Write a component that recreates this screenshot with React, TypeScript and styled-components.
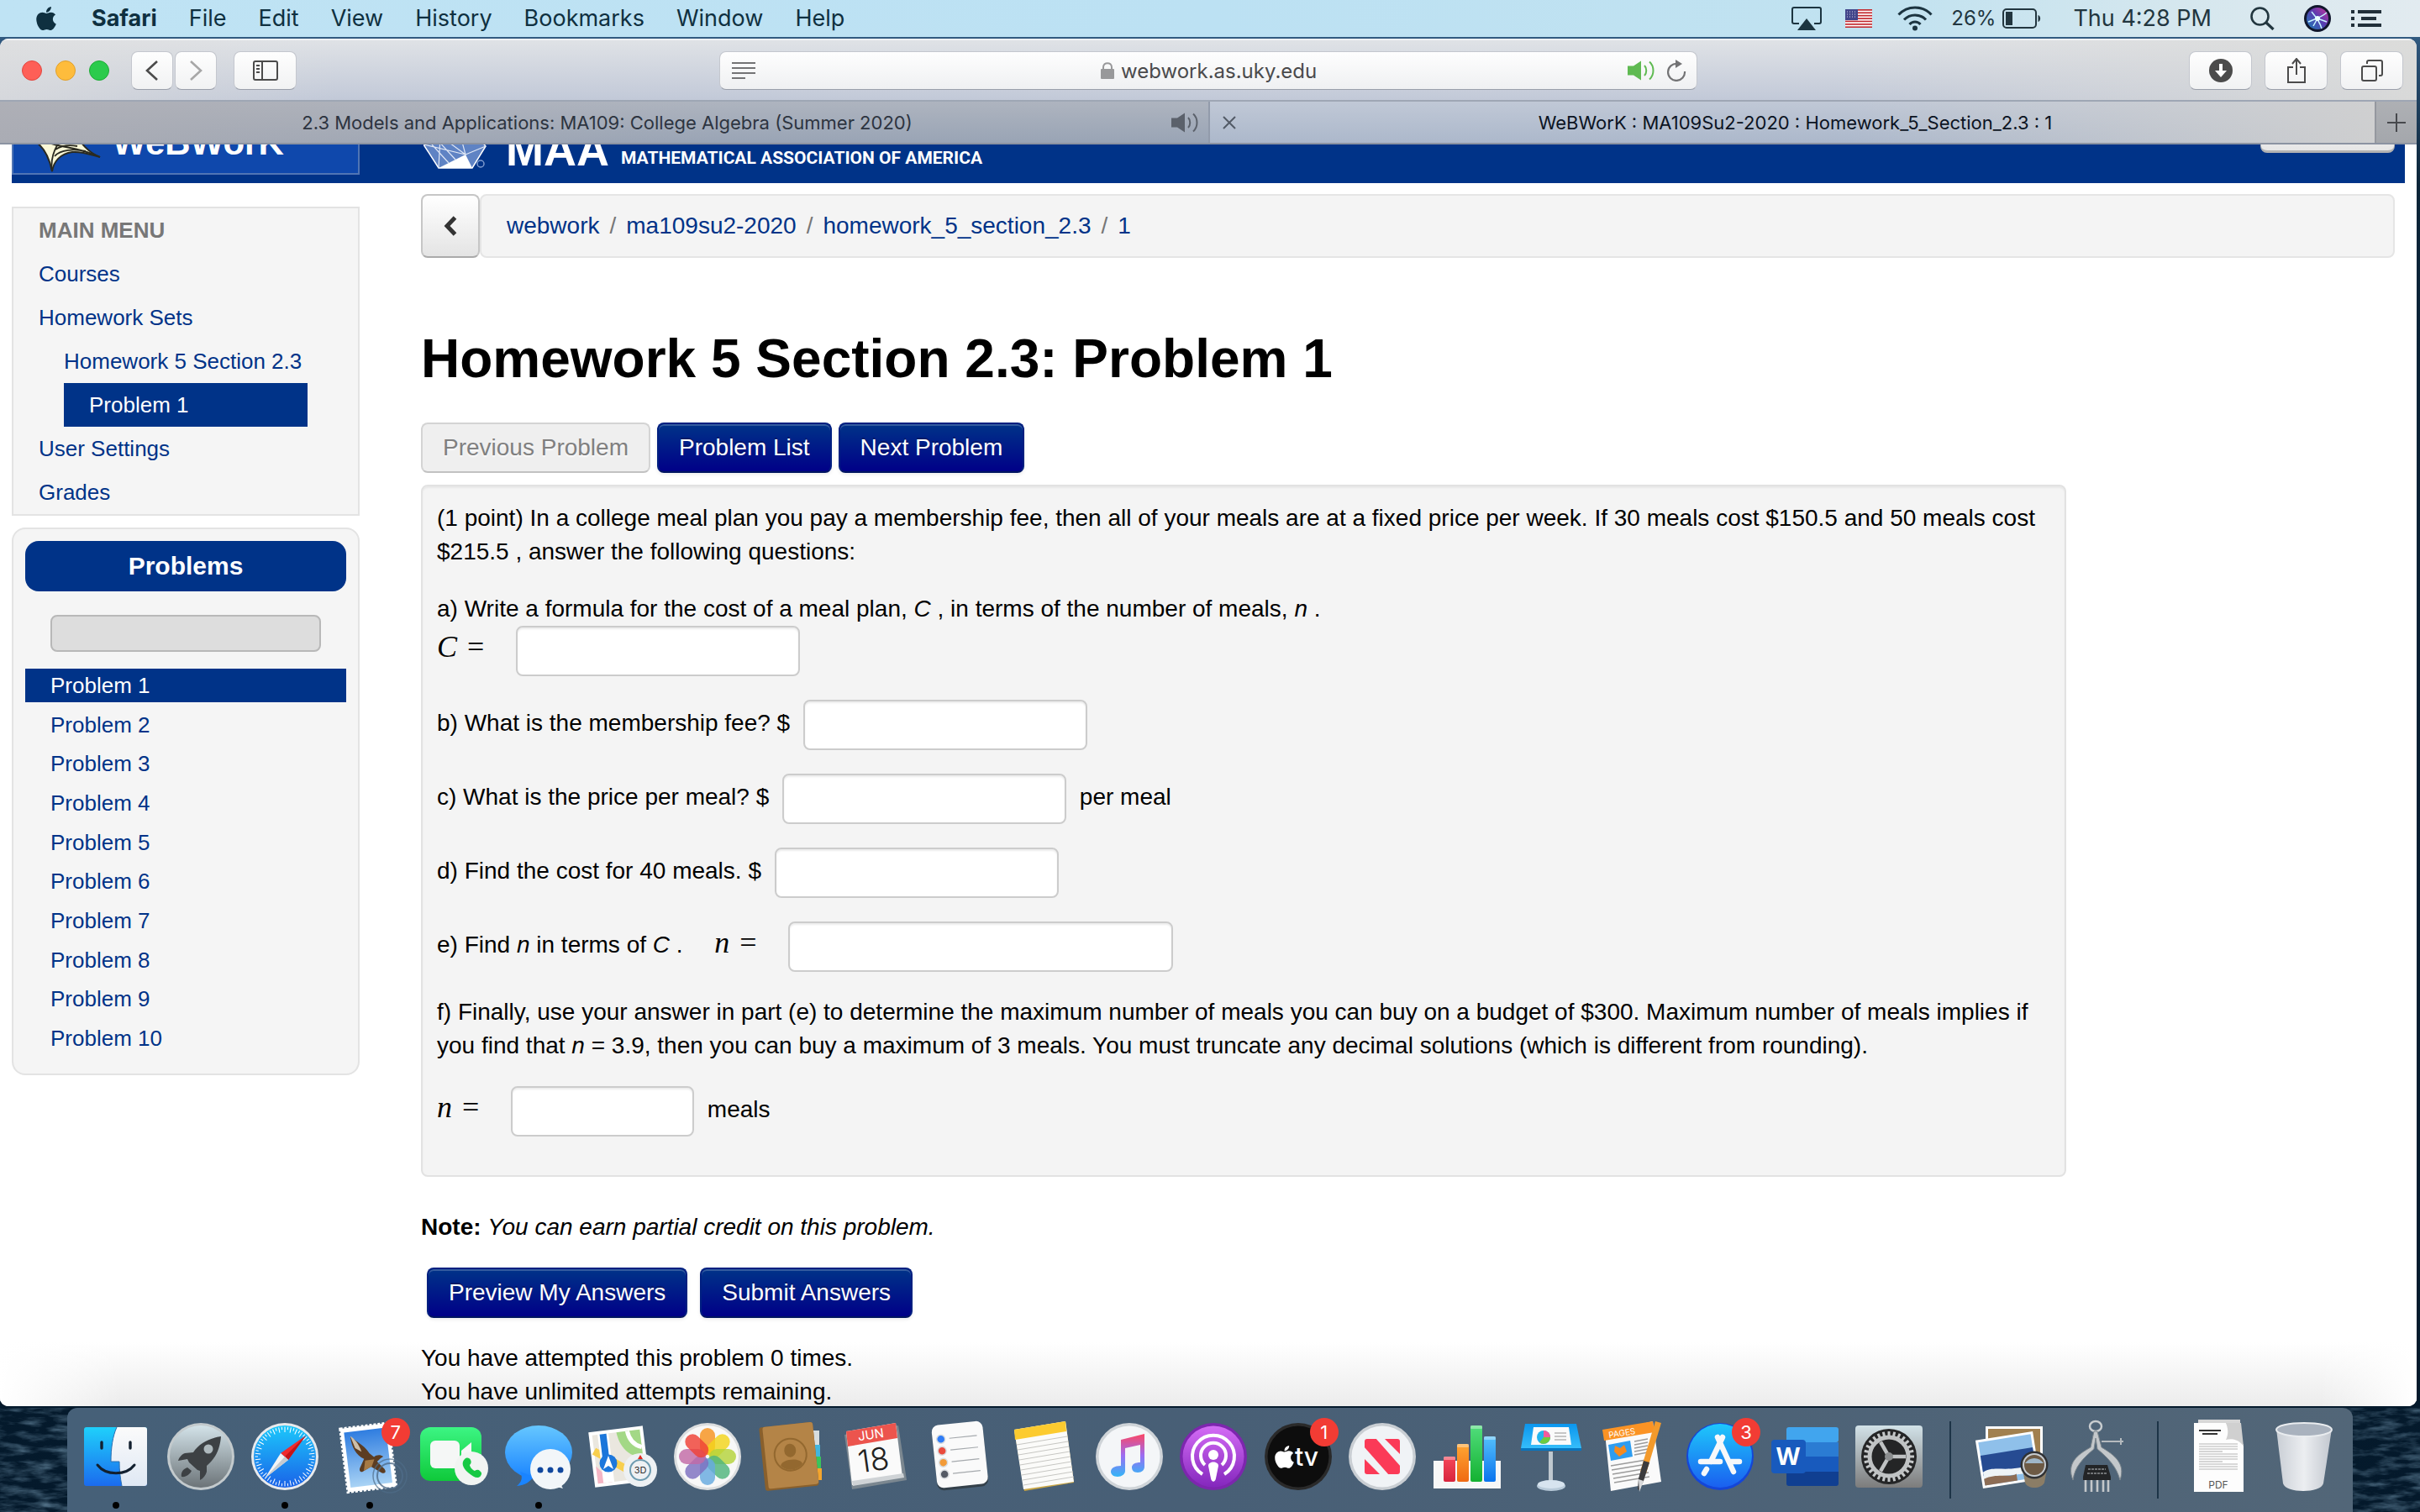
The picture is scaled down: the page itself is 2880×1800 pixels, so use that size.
import React from "react";
import styled, { createGlobalStyle, css } from "styled-components";
import { FaApple } from "react-icons/fa";

const ui = `"Inter", "Liberation Sans", sans-serif`;
const web = `"Liberation Sans", Arial, sans-serif`;
const navy = "#003388";

const GlobalStyle = createGlobalStyle`
  *, *::before, *::after { box-sizing: border-box; }
  html, body { margin: 0; padding: 0; }
  body { font-family: ${web}; color: #000; }
  button, input { font: inherit; color: inherit; margin: 0; }
  svg { display: block; }
`;

/* ---------- desktop ---------- */

const Desktop = styled.div`
  height: 100vh;
  display: flex;
  flex-direction: column;
  overflow: hidden;
  background: linear-gradient(#3f7099 0, #2d5378 60px, #0b2438 220px, #04192b);
`;

const MenuBar = styled.header`
  flex: none;
  height: 44px;
  padding: 0 46px 0 39px;
  display: flex;
  align-items: center;
  justify-content: space-between;
  background: linear-gradient(90deg, #bfe3f4, #bce1f3 50%, #c1e2f0 78%, #d5e7ee 90%, #e2ebf0);
  font-family: ${ui};
  font-size: 27px;
  color: #0f3040;
`;

const MenuGroup = styled.nav`
  display: flex;
  align-items: center;
  gap: 38px;
`;

const MenuItem = styled.button<{ $bold?: boolean }>`
  border: 0;
  padding: 0;
  background: none;
  line-height: 44px;
  font-weight: ${(p) => (p.$bold ? 700 : 400)};
`;

const Status = styled.div`
  display: flex;
  align-items: center;
  color: #22363f;
`;

const StatusItem = styled.span<{ $gap: number; $small?: boolean }>`
  margin-left: ${(p) => p.$gap}px;
  line-height: 44px;
  white-space: nowrap;
  ${(p) => p.$small && css`font-size: 24px;`}
`;

/* ---------- browser window ---------- */

const BrowserWindow = styled.main`
  flex: 1;
  min-height: 0;
  margin: 2px 4px 2px 0;
  display: flex;
  flex-direction: column;
  overflow: hidden;
  border-radius: 10px;
  background: #fff;
`;

const Toolbar = styled.div`
  flex: none;
  height: 75px;
  padding: 0 16px;
  display: grid;
  grid-template-columns: 1fr minmax(0, 1164px) 1fr;
  align-items: center;
  border-top: 2px solid #eff1f3;
  border-bottom: 2px solid #9ea6b4;
  background:
    linear-gradient(90deg, rgba(222, 222, 222, 0.7), transparent 14%, transparent 76%, rgba(219, 219, 217, 0.9)),
    linear-gradient(#dfe2e6, #c2c9d8);
`;

const ToolGroup = styled.div<{ $end?: boolean }>`
  display: flex;
  align-items: center;
  gap: ${(p) => (p.$end ? 15 : 2)}px;
  justify-content: ${(p) => (p.$end ? "flex-end" : "flex-start")};
`;

const Lights = styled.div`
  display: flex;
  gap: 16px;
  margin: 0 24px 0 10px;
`;

const Light = styled.button<{ $color: string; $edge: string }>`
  width: 24px;
  height: 24px;
  padding: 0;
  border-radius: 50%;
  border: 1px solid ${(p) => p.$edge};
  background: ${(p) => p.$color};
`;

const ToolButton = styled.button<{ $wide?: boolean }>`
  width: ${(p) => (p.$wide ? 75 : 50)}px;
  height: 46px;
  padding: 0;
  display: grid;
  place-items: center;
  border: 1px solid #c4c7ce;
  border-bottom-color: #9a9faa;
  border-radius: 8px;
  background: linear-gradient(#fefefe, #f1f2f3);
`;

const SidebarSlot = styled.div`
  margin-left: 18px;
`;

const AddressBar = styled.div`
  height: 46px;
  padding: 0 12px 0 14px;
  display: grid;
  grid-template-columns: 1fr auto 1fr;
  align-items: center;
  border: 1px solid #c4c7ce;
  border-bottom-color: #9a9faa;
  border-radius: 8px;
  background: linear-gradient(#fefefe, #eff0f2);
  font-family: ${ui};
  font-size: 24px;
  color: #4a4a4c;
`;

const AddressText = styled.label`
  display: flex;
  align-items: center;
  gap: 8px;
`;

const AddressInput = styled.input`
  width: 234px;
  height: 44px;
  padding: 2px 0 0;
  border: 0;
  outline: 0;
  background: none;
`;

const AddressIcons = styled.div`
  display: flex;
  align-items: center;
  justify-content: flex-end;
  gap: 12px;
`;

const TabBar = styled.div`
  flex: none;
  height: 51px;
  display: grid;
  grid-template-columns: 1438fr 1388fr 50px;
  border-bottom: 2px solid #8b93a2;
  font-family: ${ui};
  font-size: 22px;
`;

const Tab = styled.div<{ $active?: boolean }>`
  min-width: 0;
  padding: 0 8px 0 15px;
  display: grid;
  grid-template-columns: 36px 1fr 36px;
  align-items: center;
  color: ${(p) => (p.$active ? "#0b1322" : "#2d3440")};
  border-left: ${(p) => (p.$active ? "2px solid #929bab" : "0")};
  background: ${(p) =>
    p.$active
      ? "linear-gradient(90deg, transparent 55%, rgba(208,208,208,.95)), linear-gradient(#c0c8d6, #acb8cb)"
      : "linear-gradient(90deg, rgba(174,174,180,.8), transparent 60%), linear-gradient(#aeb4bf, #99a4b5)"};
`;

const TabTitle = styled.span`
  text-align: center;
  white-space: nowrap;
`;

const IconButton = styled.button`
  border: 0;
  padding: 0;
  background: none;
`;

const NewTab = styled.button`
  padding: 0;
  border: 0;
  border-left: 2px solid #95989f;
  display: grid;
  place-items: center;
  background: linear-gradient(#aeb0b4, #a4a7ac);
`;

/* ---------- web page ---------- */

const Viewport = styled.div`
  flex: 1;
  min-height: 0;
  overflow: hidden;
  background:
    linear-gradient(90deg, #fff, transparent 5%, transparent 96%, #fff) bottom / 100% 90px no-repeat,
    linear-gradient(#fff, #ececec) bottom / 100% 76px no-repeat,
    #fff;
`;

/* The page is shown scrolled down past most of its masthead. */
const Page = styled.div`
  margin-top: -84px;
  padding: 0 14px;
`;

const Masthead = styled.div`
  height: 130px;
  padding-bottom: 10px;
  display: flex;
  align-items: flex-end;
  background: ${navy};
  color: #fff;
`;

const WebworkLogo = styled.a`
  width: 414px;
  height: 120px;
  padding-left: 24px;
  display: flex;
  align-items: flex-end;
  gap: 14px;
  border: 2px solid #5075b4;
  background: #0f48ac;
  color: #fff;
  text-decoration: none;
`;

const WebworkName = styled.span`
  padding-bottom: 16px;
  font-size: 42px;
  font-weight: 700;
  line-height: 40px;
`;

const MaaLogo = styled.a`
  margin-left: 76px;
  height: 120px;
  padding-bottom: 6px;
  display: flex;
  align-items: flex-end;
  color: #fff;
  text-decoration: none;
`;

const MaaLetters = styled.span`
  margin-left: 18px;
  font-size: 54px;
  font-weight: 700;
  line-height: 48px;
`;

const MaaName = styled.span`
  margin-left: 14px;
  font-family: "Roboto", sans-serif;
  font-size: 21px;
  font-weight: 700;
  line-height: 28px;
  white-space: nowrap;
`;

const LogOut = styled.button`
  margin: 0 12px 26px auto;
  width: 160px;
  height: 60px;
  border: 1px solid #b3b3b3;
  border-bottom: 3px solid #b3b3b3;
  border-radius: 8px;
  background: linear-gradient(#fff, #e6e6e6);
  color: #333;
  font-size: 26px;
`;

const Columns = styled.div`
  display: grid;
  grid-template-columns: 414px minmax(0, 1fr);
  column-gap: 73px;
  align-items: start;
`;

const Sidebar = styled.aside`
  padding-top: 28px;
  font-size: 26px;
`;

const MainMenu = styled.nav`
  padding: 0 60px 0 30px;
  border: 2px solid #e3e3e3;
  background: #f5f5f5;
`;

const MenuHeading = styled.div`
  line-height: 52px;
  font-weight: 700;
  color: #777;
`;

const NavList = styled.ul<{ $nested?: boolean }>`
  margin: 0;
  padding: 0 0 0 ${(p) => (p.$nested ? 30 : 0)}px;
  list-style: none;
`;

const NavLink = styled.a<{ $active?: boolean }>`
  display: block;
  line-height: 52px;
  white-space: nowrap;
  text-decoration: none;
  color: ${(p) => (p.$active ? "#fff" : navy)};
  ${(p) => p.$active && css`padding-left: 30px; background: ${navy};`}
`;

const ProblemsPanel = styled.section`
  margin-top: 14px;
  padding: 14px 14px 22px;
  border: 2px solid #e3e3e3;
  border-radius: 16px;
  background: #f5f5f5;
`;

const PanelHeading = styled.h2`
  margin: 0;
  border-radius: 16px;
  background: ${navy};
  color: #fff;
  text-align: center;
  font-size: 30px;
  line-height: 60px;
`;

const ProgressTrack = styled.div`
  height: 44px;
  margin: 28px 30px 20px;
  border: 2px solid #b8b8b8;
  border-radius: 8px;
  background: #ddd;
`;

const ProblemList = styled.ul`
  margin: 0;
  padding: 0;
  height: 460px;
  list-style: none;
  display: flex;
  flex-direction: column;
  justify-content: space-between;
`;

const ProblemLink = styled.a<{ $active?: boolean }>`
  display: block;
  padding-left: 30px;
  line-height: 40px;
  text-decoration: none;
  color: ${(p) => (p.$active ? "#fff" : navy)};
  background: ${(p) => (p.$active ? navy : "none")};
`;

const Content = styled.div`
  padding: 13px 12px 0 0;
  font-size: 28px;
  line-height: 40px;
`;

const CrumbRow = styled.div`
  display: flex;
  height: 76px;
`;

const BackButton = styled.button`
  width: 70px;
  padding: 0;
  display: grid;
  place-items: center;
  border: 2px solid #c6c6c6;
  border-bottom-color: #aaa;
  border-radius: 8px;
  background: linear-gradient(#fff, #e4e4e4);
`;

const Crumbs = styled.nav`
  flex: 1;
  padding: 0 30px;
  display: flex;
  align-items: center;
  gap: 12px;
  border: 2px solid #e5e5e5;
  border-radius: 8px;
  background: #f4f4f4;
  color: #777;
`;

const Crumb = styled.a`
  color: ${navy};
  text-decoration: none;
`;

const Title = styled.h1`
  margin: 80px 0 36px;
  font-size: 64px;
  line-height: 80px;
`;

const ButtonRow = styled.div<{ $submit?: boolean }>`
  display: flex;
  gap: ${(p) => (p.$submit ? 15 : 8)}px;
  padding-left: ${(p) => (p.$submit ? 7 : 0)}px;
  margin: ${(p) => (p.$submit ? "28px 0" : "0 0 14px")};
`;

const Button = styled.button`
  height: 60px;
  padding: 0 24px;
  border: 2px solid #001f80;
  border-bottom-color: #001560;
  border-radius: 8px;
  background: linear-gradient(#003388, #000088);
  box-shadow: inset 0 2px 0 rgba(255, 255, 255, 0.2), 0 2px 4px rgba(0, 0, 0, 0.08);
  color: #fff;
  text-shadow: 0 -2px 0 rgba(0, 0, 0, 0.25);
  white-space: nowrap;
  &:disabled {
    border-color: #d4d4d4;
    border-bottom-color: #c2c2c2;
    background: #efefef;
    box-shadow: none;
    color: #808080;
    text-shadow: 0 2px 2px rgba(255, 255, 255, 0.75);
  }
`;

const ProblemColumns = styled.div`
  display: grid;
  grid-template-columns: 5fr 1fr;
`;

const ProblemBody = styled.form`
  padding: 18px 16px 46px 17px;
  display: grid;
  gap: 28px;
  border: 2px solid #e2e2e2;
  border-radius: 8px;
  background: #f4f4f4;
  box-shadow: inset 0 2px 2px rgba(0, 0, 0, 0.05);
`;

const Paragraph = styled.p`
  margin: 0;
`;

const MathText = styled.span<{ $indent?: boolean }>`
  margin-left: ${(p) => (p.$indent ? 30 : 0)}px;
  margin-right: 22px;
  font-family: "Liberation Serif", "Times New Roman", serif;
  font-size: 36px;
  line-height: 36px;
  i {
    margin-right: 3px;
  }
`;

const Answer = styled.input<{ $width?: number }>`
  width: ${(p) => p.$width ?? 338}px;
  height: 60px;
  margin: 0 8px;
  padding: 8px 12px;
  vertical-align: middle;
  border: 2px solid #ccc;
  border-radius: 8px;
  background: #fff;
  box-shadow: inset 0 2px 2px rgba(0, 0, 0, 0.075);
`;

const Note = styled.p`
  margin: 40px 0 0;
`;

/* ---------- dock ---------- */

const DockArea = styled.footer`
  position: relative;
  flex: none;
  height: 124px;
  padding: 0 80px;
`;

const Waves = styled.svg`
  position: absolute;
  inset: -12px 0 0;
  width: 100%;
  height: 136px;
  z-index: 0;
`;

const DockTray = styled.div`
  position: relative;
  height: 124px;
  padding: 18px 8px 0;
  display: flex;
  border-radius: 12px 12px 0 0;
  background: linear-gradient(90deg, #466078, #485f76 50%, #526678);
`;

const DockSlot = styled.button`
  flex: 1;
  height: 106px;
  padding: 0;
  border: 0;
  background: none;
  display: flex;
  flex-direction: column;
  align-items: center;
  gap: 14px;
`;

const IconHolder = styled.span`
  position: relative;
  width: 80px;
  height: 80px;
`;

const DockIcon = styled.svg`
  width: 80px;
  height: 80px;
  overflow: visible;
`;

const Badge = styled.span`
  position: absolute;
  right: -8px;
  top: -6px;
  width: 34px;
  height: 34px;
  border-radius: 50%;
  background: #f23c34;
  color: #fff;
  font: 22px/34px ${ui};
  text-align: center;
`;

const Running = styled.span`
  width: 8px;
  height: 8px;
  border-radius: 50%;
  background: #000;
`;

const DockDivider = styled.span`
  width: 2px;
  height: 92px;
  margin: -2px 22px 0;
  background: #1d3447;
`;

/* ---------- dock artwork ---------- */

const Grad = ({ id, a, b }: { id: string; a: string; b: string }) => (
  <linearGradient id={id} x1="0" y1="0" x2="0" y2="1">
    <stop offset="0" stopColor={a} />
    <stop offset="1" stopColor={b} />
  </linearGradient>
);

const spokes = (n: number) => Array.from({ length: n }, (_, i) => (i * 360) / n);

const Finder = (
  <>
    <Grad id="fa" a="#1fd0fb" b="#1b6bee" />
    <Grad id="fb" a="#fbfbfb" b="#dfe8f4" />
    <rect x="2" y="5" width="75" height="70" rx="3" fill="url(#fa)" />
    <path d="M41 5H74a3 3 0 0 1 3 3V72a3 3 0 0 1-3 3H47C45 65 44 56 44 46H34C34 30 36 16 41 5Z" fill="url(#fb)" />
    <path d="M41 5C36 16 34 30 34 46H44C44 56 45 65 47 75" fill="none" stroke="#2a6fb0" strokeWidth="1" />
    <path d="M23 23v7M57 23v7" stroke="#12202f" strokeWidth="3.4" strokeLinecap="round" />
    <path d="M18 50c10 13 34 13 44 0" fill="none" stroke="#12202f" strokeWidth="3" strokeLinecap="round" />
  </>
);

const Launchpad = (
  <>
    <Grad id="la" a="#d3e3e9" b="#6c7478" />
    <circle cx="40" cy="40" r="40" fill="#c3cacd" />
    <circle cx="40" cy="40" r="37" fill="url(#la)" />
    <path d="M64 16C50 18 38 24 31 35L21 36C16 38 14 42 13 45L24 43L26 47L36 56L39 57L39 68C43 66 46 62 47 58L47 51C58 42 63 30 64 16Z" fill="#3d4144" />
    <path d="M24 53C18 55 16 60 17 64C22 65 27 61 29 57Z" fill="#3d4144" />
    <circle cx="49" cy="31" r="5.5" fill="#aeb9bd" />
  </>
);

const Safari = (
  <>
    <Grad id="sa" a="#1cc8fb" b="#1a62e8" />
    <circle cx="40" cy="40" r="40" fill="#e9eaec" />
    <circle cx="40" cy="40" r="37" fill="url(#sa)" />
    {spokes(60).map((a, i) => (
      <path key={a} d={i % 2 ? "M40 4.500V8" : "M40 4.500V11"} stroke="#fff" strokeWidth="1" transform={`rotate(${a} 40 40)`} />
    ))}
    <path d="M65 15L35 36L44 44Z" fill="#ee2b2e" />
    <path d="M65 15L40 40L44 44Z" fill="#c41418" />
    <path d="M16 66L35 36L44 44Z" fill="#f3f4f5" />
    <path d="M16 66L40 40L44 44Z" fill="#c6cbd0" />
  </>
);

const Mail = (
  <g>
    <Grad id="ma" a="#2f7de0" b="#a9d3f5" />
    <g transform="rotate(-7 40 40)">
      <rect x="9" y="3" width="58" height="76" fill="#fff" stroke="#fff" strokeWidth="3" strokeDasharray="3 2" />
      <rect x="13" y="8" width="50" height="66" fill="url(#ma)" />
      <path d="M20 14C20 26 24 36 33 42L28 50C25 54 26 57 29 57L40 52L52 61C56 63 58 60 55 56L48 47C51 45 53 43 56 42C53 39 48 39 45 41L40 36C37 28 29 22 20 14Z" fill="#5c3d22" />
      <path d="M20 13C24 16 29 23 31 33L24 28Z" fill="#cdbfa9" />
      <path d="M34 44L45 44L41 52L31 56Z" fill="#a67a45" />
    </g>
    <circle cx="64" cy="63" r="15" fill="none" stroke="#4f6c88" strokeWidth="2" opacity=".8" />
    <circle cx="64" cy="63" r="20" fill="none" stroke="#4f6c88" strokeWidth="1.500" opacity=".7" />
  </g>
);

const FaceTime = (
  <>
    <Grad id="ga" a="#3cf583" b="#0fc93a" />
    <rect x="0" y="5" width="73" height="64" rx="12" fill="url(#ga)" />
    <rect x="12" y="21" width="35" height="33" rx="6" fill="#f5f7f6" />
    <path d="M49 33L61 23V52L49 44Z" fill="#f5f7f6" />
    <circle cx="61" cy="54" r="20" fill="#f1f4f2" />
    <path d="M53 43c-4 4-3 10 4 16s12 8 15 4c2-3 1-4-1-6s-4-1-6 0c-3-1-6-5-6-7c2-2 2-4 1-6s-4-4-7-1Z" fill="#17c944" />
  </>
);

const Messages = (
  <>
    <Grad id="mb" a="#66c7ff" b="#1a84ff" />
    <ellipse cx="40" cy="35" rx="40" ry="32" fill="url(#mb)" />
    <path d="M18 58C22 66 19 71 14 75C24 74 30 70 34 64Z" fill="#1a84ff" />
    <circle cx="54" cy="55" r="24" fill="#f2f6f9" />
    <path d="M56 76C60 77 64 76 69 78C67 75 66 72 68 69Z" fill="#f2f6f9" />
    <circle cx="42" cy="56" r="3.500" fill="#10479e" />
    <circle cx="54" cy="56" r="3.500" fill="#10479e" />
    <circle cx="66" cy="56" r="3.500" fill="#10479e" />
  </>
);

const Maps = (
  <>
    <g transform="rotate(-7 36 40)">
      <rect x="3" y="7" width="65" height="66" fill="#fff" />
      <rect x="7" y="11" width="57" height="58" fill="#eae7df" />
      <path d="M36 11H64V44C48 42 38 30 36 11Z" fill="#a3d886" />
      <path d="M49 11C50 22 56 29 64 32" fill="none" stroke="#fff" strokeWidth="5" />
      <path d="M7 30L54 64" stroke="#f8cf4e" strokeWidth="9" />
      <path d="M7 48L24 69H7Z" fill="#f5b5c4" />
      <path d="M20 11V69" stroke="#fff" strokeWidth="13" />
      <path d="M20 11V48" stroke="#1b76da" strokeWidth="8" />
    </g>
    <circle cx="23" cy="48" r="10.500" fill="#1c77dc" />
    <path d="M23 39L29 55L23 51L17 55Z" fill="#fff" />
    <circle cx="61" cy="56" r="20" fill="#eef1f3" />
    <circle cx="61" cy="56" r="12" fill="none" stroke="#6c9bb0" strokeWidth="2" />
    <path d="M61 38l3 5h-6Z" fill="#e3261d" />
    <text x="61" y="60" textAnchor="middle" fontFamily="Inter, sans-serif" fontSize="11" fill="#333">3D</text>
  </>
);

const petals = ["#f7931e", "#f3d41b", "#b4d33a", "#4fb57b", "#66a9df", "#7d6fc0", "#c26aa6", "#ef4136"];
const Photos = (
  <>
    <circle cx="40" cy="40" r="40" fill="#dcdedf" />
    <circle cx="40" cy="40" r="37" fill="#f8f8f8" />
    {petals.map((c, i) => (
      <rect key={c} x="31" y="6" width="18" height="32" rx="9" fill={c} opacity=".82" transform={`rotate(${i * 45} 40 40)`} />
    ))}
  </>
);

const Contacts = (
  <>
    <rect x="66" y="9" width="7" height="18" fill="#d7dde0" />
    <rect x="67" y="26" width="7" height="14" fill="#41b6e0" />
    <rect x="68" y="40" width="7" height="14" fill="#3ac45c" />
    <rect x="69" y="54" width="7" height="14" fill="#f4a52d" />
    <g transform="rotate(-6 36 40)">
      <rect x="5" y="2" width="64" height="76" rx="3" fill="#8a602c" />
      <rect x="9" y="2" width="60" height="74" rx="3" fill="#b48447" />
      <circle cx="39" cy="38" r="19" fill="none" stroke="#93682f" strokeWidth="2" />
      <ellipse cx="39" cy="33" rx="7" ry="8" fill="#93682f" />
      <path d="M26 50C28 42 50 42 52 50C46 58 32 58 26 50Z" fill="#93682f" />
    </g>
  </>
);

const Calendar = (
  <>
    <path d="M3 14L67 3L77 68L12 79Z" fill="#7b8790" />
    <path d="M5 10L64 0L72 64L12 74Z" fill="#fafafa" />
    <path d="M5 10L64 0L66 18L7 28Z" fill="#ec544d" />
    <path d="M12 69L73 60L74 65L13 75Z" fill="#cfd3d6" />
    <g transform="rotate(-8 37 40)" fontFamily="Inter, sans-serif" textAnchor="middle">
      <text x="38" y="19" fontSize="15" fill="#fff">JUN</text>
      <text x="37" y="57" fontSize="37" fontWeight="300" fill="#222">18</text>
    </g>
  </>
);

const Reminders = (
  <g transform="rotate(-6 40 40)">
    <rect x="9" y="2" width="61" height="76" rx="8" fill="#34404a" />
    <rect x="9" y="0" width="61" height="75" rx="8" fill="#fafafa" />
    {["#2f7cf6", "#ea4b3d", "#f39b38", "#555b66"].map((c, i) => (
      <g key={c}>
        <circle cx="19" cy={17 + i * 14} r="5" fill={c} stroke="#d9dde0" strokeWidth="1.500" />
        <path d={`M29 ${17 + i * 14}H62`} stroke="#a5a9ad" strokeWidth="1.200" />
      </g>
    ))}
  </g>
);

const Notes = (
  <>
    <path d="M4 8L65 -2L75 71L16 81Z" fill="#c9a646" />
    <path d="M4 8L65 -2L75 70L15 79Z" fill="#fbfbf9" />
    <path d="M4 8L65 -2L66 10L5 20Z" fill="#fccb2f" />
    {Array.from({ length: 9 }, (_, i) => (
      <path key={i} d={`M${7 + i} ${26 + i * 6}L${67 + i} ${16 + i * 6}`} stroke="#c6c6c2" strokeWidth="1" />
    ))}
  </>
);

const Music = (
  <>
    <linearGradient id="mu" x1="0" y1="0" x2="0" y2="1">
      <stop offset="0" stopColor="#fb4664" />
      <stop offset=".5" stopColor="#9d6cf2" />
      <stop offset="1" stopColor="#32b6f7" />
    </linearGradient>
    <circle cx="40" cy="40" r="40" fill="#cfd4d8" />
    <circle cx="40" cy="40" r="36.500" fill="#f4f6f8" />
    <path d="M30 20L58 13V52C58 56 55 59 50 59C45 59 43 56 43 53C43 49 47 47 53 47V26L35 30V57C35 61 31 64 26 64C21 64 18 61 18 58C18 54 22 51 30 51Z" fill="url(#mu)" />
  </>
);

const Podcasts = (
  <>
    <Grad id="pa" a="#d46cf5" b="#8427bd" />
    <circle cx="40" cy="40" r="40" fill="#7d26ae" />
    <circle cx="40" cy="40" r="36.500" fill="url(#pa)" />
    <path d="M27 61A25 25 0 1 1 53 61" fill="none" stroke="#fff" strokeWidth="4" />
    <path d="M30 50A15 15 0 1 1 50 50" fill="none" stroke="#fff" strokeWidth="4" />
    <circle cx="40" cy="38" r="6" fill="#fff" />
    <path d="M34 51C34 45 46 45 46 51L43 66C42 71 38 71 37 66Z" fill="#fff" />
  </>
);

const AppleTV = (
  <>
    <circle cx="40" cy="40" r="40" fill="#2a2a2a" />
    <circle cx="40" cy="40" r="36.500" fill="#0d0d0d" />
    <g transform="translate(12 25)">
      <path
        transform="scale(0.06)"
        fill="#fff"
        d="M318.700 268.700c-.2-36.700 16.400-64.400 50-84.800-18.800-26.900-47.200-41.700-84.700-44.600-35.500-2.800-74.300 20.700-88.500 20.700-15 0-49.400-19.700-76.400-19.700C63.300 141.200 4 184.800 4 273.500q0 39.300 14.400 81.200c12.800 36.700 59 126.700 107.200 125.200 25.200-.6 43-17.900 75.800-17.900 31.800 0 48.300 17.900 76.400 17.900 48.600-.7 90.400-82.500 102.600-119.300-65.200-30.700-61.700-90-61.700-91.900zm-56.600-164.200c27.300-32.400 24.800-61.900 24-72.500-24.100 1.400-52 16.400-67.900 34.900-17.500 19.800-27.800 44.300-25.600 71.900 26.100 2 49.900-11.400 69.500-34.300z"
      />
    </g>
    <text x="36" y="51" fontFamily="Inter, sans-serif" fontSize="30" fontWeight="500" fill="#fff">tv</text>
  </>
);

const News = (
  <>
    <circle cx="40" cy="40" r="40" fill="#c9ced3" />
    <circle cx="40" cy="40" r="36.500" fill="#f0f3f6" />
    <rect x="19" y="19" width="42" height="42" rx="3" fill="#fb3a57" />
    <path d="M32 18H42L62 38V52Z" fill="#f0f3f6" />
    <path d="M18 28L48 62H38L18 42Z" fill="#f0f3f6" />
  </>
);

const Numbers = (
  <>
    <rect x="0" y="45" width="80" height="33" fill="#f7f7f7" />
    {[
      [12, 40, "#f5475a", "#d8253d"],
      [28, 25, "#ffa632", "#f06a13"],
      [44, 3, "#51dd7c", "#14b131"],
      [60, 16, "#55c1fb", "#0a74ee"],
    ].map(([x, y, a, b], i) => (
      <g key={i}>
        <Grad id={`nb${i}`} a={String(a)} b={String(b)} />
        <rect x={x} y={y} width="14" height={70 - Number(y)} rx="2" fill={`url(#nb${i})`} />
        <rect x={x} y={y} width="14" height="4" rx="1" fill="#fff" opacity=".35" />
      </g>
    ))}
  </>
);

const Keynote = (
  <>
    <Grad id="ka" a="#0b96ee" b="#35bdfa" />
    <path d="M37 34H42V75H37Z" fill="#bfc8cf" />
    <ellipse cx="40" cy="75" rx="17" ry="6" fill="#b8cad9" />
    <ellipse cx="40" cy="73" rx="16" ry="5" fill="#d7e4ef" />
    <path d="M9 1H70L76 30H4Z" fill="url(#ka)" />
    <path d="M4 30H76V33H4Z" fill="#0775bf" />
    <path d="M19 5H61L64 26H16Z" fill="#fafafa" />
    <circle cx="31" cy="17" r="8" fill="#22b4ee" />
    <path d="M31 17V9A8 8 0 0 1 39 17Z" fill="#f25a9c" />
    <path d="M31 17H39A8 8 0 0 1 26 23Z" fill="#6ecb40" />
    <path d="M44 12H58M44 16H58M44 20H58" stroke="#b5b5b5" strokeWidth="1.500" />
  </>
);

const Pages = (
  <>
    <path d="M3 12L60 -2L70 70L10 81Z" fill="#fafafa" />
    <path d="M0 8L60 -2L62 11L2 21Z" fill="#fb9324" />
    <text x="8" y="18" fontFamily="Inter, sans-serif" fontSize="10" fill="#fff" transform="rotate(-9 8 18)">PAGES</text>
    <path d="M7 26L33 21L36 40L10 45Z" fill="#2e9df0" />
    <path d="M15 27L21 30L26 26L29 34L20 40L14 34Z" fill="#f58a1e" />
    {[0, 1, 2, 3, 4].map((i) => (
      <path key={i} d={`M${10 + i} ${51 + i * 5}L${52 + i} ${44 + i * 5}M38 ${22 + i * 4}L54 ${19 + i * 4}`} stroke="#9b9b9b" strokeWidth="1.300" />
    ))}
    <path d="M63 -2L70 0L52 60L45 58Z" fill="#f39a2b" />
    <path d="M49 45L56 47L49 69L44 80L42 79L43 66Z" fill="#3c3c3e" />
    <path d="M43 67L49 69L44 82Z" fill="#d9dadc" />
  </>
);

const AppStore = (
  <>
    <Grad id="as" a="#1ec8fb" b="#1a5ff0" />
    <circle cx="40" cy="40" r="40" fill="#1446d8" />
    <circle cx="40" cy="39" r="38" fill="url(#as)" />
    <path d="M37 17L56 58M43 17L29 46M24 55L21 60M17 46H40M52 46H63" stroke="#f6f8fa" strokeWidth="6.500" strokeLinecap="round" fill="none" />
  </>
);

const Word = (
  <g transform="translate(5 0)">
    <rect x="13" y="5" width="62" height="18" rx="3" fill="#41a5ee" />
    <rect x="13" y="23" width="62" height="18" fill="#2b7cd3" />
    <rect x="13" y="40" width="62" height="18" fill="#185abd" />
    <path d="M13 58H75V72a3 3 0 0 1-3 3H16a3 3 0 0 1-3-3Z" fill="#103f91" />
    <rect x="-5" y="20" width="41" height="40" rx="4" fill="#185abd" />
    <text x="15" y="50" textAnchor="middle" fontFamily="Open Sans, sans-serif" fontSize="29" fontWeight="700" fill="#fff">W</text>
  </g>
);

const Prefs = (
  <>
    <Grad id="sp" a="#d2e2e8" b="#7c7c7c" />
    <rect x="0" y="3" width="80" height="74" rx="4" fill="url(#sp)" />
    <circle cx="40" cy="40" r="33" fill="#242526" />
    {spokes(28).map((a) => (
      <path key={a} d="M40 10V16" stroke="#c5c8c9" strokeWidth="3" transform={`rotate(${a} 40 40)`} />
    ))}
    <circle cx="40" cy="40" r="23" fill="none" stroke="#bfc2c3" strokeWidth="5" />
    {[90, 210, 330].map((a) => (
      <path key={a} d="M40 40V20" stroke="#bfc2c3" strokeWidth="4.500" transform={`rotate(${a} 40 40)`} />
    ))}
    <circle cx="40" cy="40" r="5" fill="#8a8d8e" />
  </>
);

const Preview = (
  <>
    <rect x="8" y="4" width="68" height="62" fill="#fff" />
    <rect x="11" y="7" width="62" height="56" fill="#a1804f" />
    <g transform="rotate(-9 34 44)">
      <rect x="0" y="15" width="69" height="58" fill="#fff" />
      <rect x="3" y="18" width="63" height="52" fill="#8fc0ea" />
      <rect x="3" y="34" width="63" height="24" fill="#264b92" />
      <path d="M3 54C18 47 30 60 66 54V62C40 66 20 58 3 64Z" fill="#eef4f7" />
      <path d="M3 62C20 57 34 66 42 62V70H3Z" fill="#8d6d55" />
    </g>
    <path d="M51 50L82 50L78 71C74 79 58 79 55 71Z" fill="#8b7d66" />
    <circle cx="66" cy="50" r="16.500" fill="#2f3134" />
    <circle cx="66" cy="50" r="14" fill="#c6cbd0" />
    <circle cx="66" cy="50" r="12" fill="#6d5a45" />
    <path d="M55 48C60 40 72 40 77 48Z" fill="#9fb6c8" />
  </>
);

const Caliper = (
  <>
    <ellipse cx="39" cy="4" rx="7" ry="6" fill="none" stroke="#c9cdd0" strokeWidth="2.500" />
    <path d="M37 10L33 29C17 38 4 48 12 68C14 52 24 42 37 31L39 18L41 31C54 42 64 52 68 68C75 48 61 38 46 29L41 10Z" fill="#c4c8cb" stroke="#7c868d" strokeWidth="1" />
    <path d="M46 22H72M69 18V26" stroke="#b5babe" strokeWidth="2" />
    <path d="M27 50H53L57 64V68H24V64Z" fill="#232527" />
    <path d="M30 55H51M29 60H52" stroke="#8c8f92" strokeWidth="1.500" strokeDasharray="3 1" />
    {[27, 34, 41, 48, 54].map((x) => (
      <path key={x} d={`M${x} 68V76M${x} 76V82`} stroke="#c3c7ca" strokeWidth="2.600" />
    ))}
  </>
);

const PdfFile = (
  <>
    <rect x="15" y="-4" width="50" height="6" fill="#d7d7d7" />
    <path d="M10 0H48L69 26V82H10Z" fill="#fdfdfd" />
    <path d="M48 0C52 10 50 16 48 20C56 18 64 20 69 28L66 0Z" fill="#d0d0d0" />
    <path d="M16 9H42M20 13H38" stroke="#333" strokeWidth="2" />
    {Array.from({ length: 11 }, (_, i) => (
      <path key={i} d={`M16 ${25 + i * 3}H${i % 4 === 3 ? 44 : 62}`} stroke="#b5b5b5" strokeWidth="1.100" />
    ))}
    <text x="39" y="78" textAnchor="middle" fontFamily="Inter, sans-serif" fontSize="12" fill="#555">PDF</text>
  </>
);

const Trash = (
  <>
    <linearGradient id="tr" x1="0" x2="1" y1="0" y2="0">
      <stop offset="0" stopColor="#c9ced5" />
      <stop offset=".5" stopColor="#eceef1" />
      <stop offset="1" stopColor="#c2c7cf" />
    </linearGradient>
    <path d="M7 7L15 72C18 84 60 84 63 72L73 7Z" fill="url(#tr)" />
    <ellipse cx="40" cy="8" rx="33" ry="8" fill="#a9b2be" stroke="#e9ecef" strokeWidth="2" />
  </>
);

type DockEntry = { name: string; art: React.ReactNode; badge?: string; running?: boolean };

const apps: DockEntry[] = [
  { name: "Finder", art: Finder, running: true },
  { name: "Launchpad", art: Launchpad },
  { name: "Safari", art: Safari, running: true },
  { name: "Mail", art: Mail, badge: "7", running: true },
  { name: "FaceTime", art: FaceTime },
  { name: "Messages", art: Messages, running: true },
  { name: "Maps", art: Maps },
  { name: "Photos", art: Photos },
  { name: "Contacts", art: Contacts },
  { name: "Calendar", art: Calendar },
  { name: "Reminders", art: Reminders },
  { name: "Notes", art: Notes },
  { name: "Music", art: Music },
  { name: "Podcasts", art: Podcasts },
  { name: "TV", art: AppleTV, badge: "1" },
  { name: "News", art: News },
  { name: "Numbers", art: Numbers },
  { name: "Keynote", art: Keynote },
  { name: "Pages", art: Pages },
  { name: "App Store", art: AppStore, badge: "3" },
  { name: "Word", art: Word },
  { name: "System Preferences", art: Prefs },
];
const recent: DockEntry[] = [
  { name: "Preview", art: Preview },
  { name: "System Information", art: Caliper },
];
const files: DockEntry[] = [
  { name: "Document", art: PdfFile },
  { name: "Trash", art: Trash },
];

const DockItems = ({ items }: { items: DockEntry[] }) => (
  <>
    {items.map((it) => (
      <DockSlot key={it.name} aria-label={it.name}>
        <IconHolder>
          <DockIcon viewBox="0 0 80 80">{it.art}</DockIcon>
          {it.badge && <Badge>{it.badge}</Badge>}
        </IconHolder>
        {it.running && <Running />}
      </DockSlot>
    ))}
  </>
);

/* ---------- small glyphs ---------- */

const Speaker = ({ color }: { color: string }) => (
  <svg width="34" height="24" viewBox="0 0 34 24" fill="none" stroke={color} strokeWidth="2">
    <path d="M0 6.500H7L16 0.500V23.500L7 17.500H0Z" fill={color} stroke="none" />
    <path d="M20 6C23 9 23 15 20 18M26 1.500C32 7 32 17 26 22.500" />
  </svg>
);

const Siri = () => (
  <svg width="32" height="32" viewBox="0 0 32 32">
    <linearGradient id="siri" x1="1" y1="0" x2="0" y2="1">
      <stop offset="0" stopColor="#d0359a" />
      <stop offset=".45" stopColor="#5a3bb0" />
      <stop offset="1" stopColor="#1a7fb8" />
    </linearGradient>
    <circle cx="16" cy="16" r="16" fill="#10162c" />
    <circle cx="16" cy="16" r="13" fill="url(#siri)" />
    <path d="M5 20C12 17 20 15 27 9M9 8C14 14 19 20 21 28M16 16L11 25M16 16L27 20" stroke="#c8f6ff" strokeWidth="1.500" fill="none" />
    <circle cx="16" cy="16" r="3" fill="#e9ffff" />
  </svg>
);

const Flag = () => (
  <svg width="32" height="22" viewBox="0 0 32 22">
    <rect width="32" height="22" fill="#fff" />
    {[0, 1, 2, 3, 4, 5, 6].map((i) => (
      <rect key={i} y={i * 3.4} width="32" height="1.700" fill="#c22a30" />
    ))}
    <rect width="15" height="13" fill="#42458a" />
    <path d="M2 3H14M2 6H14M2 9H14" stroke="#cfd0e6" strokeWidth="1" strokeDasharray="1 2" />
  </svg>
);

const problems = Array.from({ length: 10 }, (_, i) => `Problem ${i + 1}`);

export default function App() {
  return (
    <Desktop>
      <GlobalStyle />
      <MenuBar>
        <MenuGroup>
          <MenuItem aria-label="Apple menu">
            <FaApple size={32} />
          </MenuItem>
          <MenuItem $bold>Safari</MenuItem>
          {["File", "Edit", "View", "History", "Bookmarks", "Window", "Help"].map((m) => (
            <MenuItem key={m}>{m}</MenuItem>
          ))}
        </MenuGroup>
        <Status>
          <svg width="36" height="28" viewBox="0 0 36 28">
            <path d="M9 20H3a2 2 0 0 1-2-2V3a2 2 0 0 1 2-2H33a2 2 0 0 1 2 2V18a2 2 0 0 1-2 2H27" fill="none" stroke="#1c3440" strokeWidth="2" />
            <path d="M18 14L29 28H7Z" fill="#1c3440" />
          </svg>
          <StatusItem $gap={28}><Flag /></StatusItem>
          <StatusItem $gap={30}>
            <svg width="42" height="30" viewBox="0 0 42 30" fill="none" stroke="#1c3440" strokeWidth="3">
              <path d="M1.500 10.500C12 -1 30 -1 40.500 10.500M8 16.500C15 9 27 9 34 16.500M14.500 22C18 18 24 18 27.500 22" />
              <circle cx="21" cy="26.500" r="3" fill="#1c3440" stroke="none" />
            </svg>
          </StatusItem>
          <StatusItem $gap={22} $small>26%</StatusItem>
          <StatusItem $gap={8}>
            <svg width="46" height="24" viewBox="0 0 46 24">
              <rect x="1" y="1" width="39" height="22" rx="4" fill="none" stroke="#22363f" strokeWidth="2" />
              <rect x="4" y="4" width="8" height="16" fill="#22363f" />
              <path d="M42.500 8C46 9 46 15 42.500 16Z" fill="#22363f" />
            </svg>
          </StatusItem>
          <StatusItem $gap={38}>Thu 4:28 PM</StatusItem>
          <StatusItem $gap={46}>
            <svg width="29" height="28" viewBox="0 0 29 28" fill="none" stroke="#22363f" strokeWidth="2.600">
              <circle cx="11.500" cy="11.500" r="10" />
              <path d="M19 19L27.500 27" strokeWidth="3.200" />
            </svg>
          </StatusItem>
          <StatusItem $gap={35}><Siri /></StatusItem>
          <StatusItem $gap={24}>
            <svg width="36" height="20" viewBox="0 0 36 20" fill="#22303a">
              <path d="M0 0H4V4H0ZM0 8H4V12H0ZM0 16H4V20H0ZM8 0H36V4H8ZM12 8H30V12H12ZM8 16H36V20H8Z" />
            </svg>
          </StatusItem>
        </Status>
      </MenuBar>

      <BrowserWindow>
        <Toolbar>
          <ToolGroup>
            <Lights>
              <Light aria-label="Close" $color="#fe5f57" $edge="#e2463f" />
              <Light aria-label="Minimize" $color="#febc3c" $edge="#e0a02c" />
              <Light aria-label="Zoom" $color="#2bcb4c" $edge="#1eab36" />
            </Lights>
            <ToolButton aria-label="Back">
              <svg width="16" height="24" viewBox="0 0 16 24"><path d="M14 1L2 12L14 23" fill="none" stroke="#4b4b4b" strokeWidth="2.600" /></svg>
            </ToolButton>
            <ToolButton aria-label="Forward">
              <svg width="16" height="24" viewBox="0 0 16 24"><path d="M2 1L14 12L2 23" fill="none" stroke="#a7a7a7" strokeWidth="2.600" /></svg>
            </ToolButton>
            <SidebarSlot>
              <ToolButton $wide aria-label="Sidebar">
                <svg width="30" height="24" viewBox="0 0 30 24" fill="none" stroke="#4b4b4b" strokeWidth="2">
                  <rect x="1" y="1" width="28" height="22" rx="2" />
                  <path d="M11 1V23M4 6H8M4 10H8M4 14H8" />
                </svg>
              </ToolButton>
            </SidebarSlot>
          </ToolGroup>
          <AddressBar>
            <svg width="28" height="20" viewBox="0 0 28 20"><path d="M0 1H28M0 7H28M0 13H28M0 19H16" stroke="#737375" strokeWidth="2" /></svg>
            <AddressText>
              <svg width="16" height="20" viewBox="0 0 16 20">
                <rect y="8" width="16" height="12" rx="1" fill="#98989a" />
                <path d="M3 9V6C3 -0.500 13 -0.500 13 6V9" fill="none" stroke="#98989a" strokeWidth="2" />
              </svg>
              <AddressInput aria-label="Address" defaultValue="webwork.as.uky.edu" />
            </AddressText>
            <AddressIcons>
              <IconButton aria-label="Mute page"><Speaker color="#5fba52" /></IconButton>
              <IconButton aria-label="Reload">
                <svg width="24" height="26" viewBox="0 0 24 26">
                  <path d="M13 5A10 10 0 1 0 22 14" fill="none" stroke="#737375" strokeWidth="2.200" />
                  <path d="M11 0L19 5L11 10Z" fill="#737375" />
                </svg>
              </IconButton>
            </AddressIcons>
          </AddressBar>
          <ToolGroup $end>
            <ToolButton $wide aria-label="Downloads">
              <svg width="28" height="28" viewBox="0 0 28 28">
                <circle cx="14" cy="14" r="14" fill="#4b4b4b" />
                <path d="M12 6H16V14H21L14 22L7 14H12Z" fill="#fff" />
              </svg>
            </ToolButton>
            <ToolButton $wide aria-label="Share">
              <svg width="24" height="30" viewBox="0 0 24 30" fill="none" stroke="#4b4b4b" strokeWidth="2">
                <path d="M8 11H2V29H22V11H16M12 20V1M7 7L12 1L17 7" />
              </svg>
            </ToolButton>
            <ToolButton $wide aria-label="Show tabs">
              <svg width="26" height="26" viewBox="0 0 26 26" fill="none" stroke="#4b4b4b" strokeWidth="2">
                <rect x="1" y="8" width="17" height="17" rx="2" />
                <path d="M7 5V3a2 2 0 0 1 2-2H23a2 2 0 0 1 2 2V17a2 2 0 0 1-2 2H21" />
              </svg>
            </ToolButton>
          </ToolGroup>
        </Toolbar>

        <TabBar>
          <Tab>
            <span />
            <TabTitle>2.3 Models and Applications: MA109: College Algebra (Summer 2020)</TabTitle>
            <IconButton aria-label="Mute tab"><Speaker color="#5b616b" /></IconButton>
          </Tab>
          <Tab $active>
            <IconButton aria-label="Close tab">
              <svg width="16" height="16" viewBox="0 0 16 16"><path d="M1 1L15 15M15 1L1 15" stroke="#535a66" strokeWidth="2" /></svg>
            </IconButton>
            <TabTitle>WeBWorK : MA109Su2-2020 : Homework_5_Section_2.3 : 1</TabTitle>
          </Tab>
          <NewTab aria-label="New tab">
            <svg width="22" height="22" viewBox="0 0 22 22"><path d="M11 0V22M0 11H22" stroke="#47494d" strokeWidth="2" /></svg>
          </NewTab>
        </TabBar>

        <Viewport>
          <Page>
            <Masthead>
              <WebworkLogo href="#">
                <svg width="80" height="76" viewBox="0 0 80 76">
                  <path d="M-2 36C10 42 18 54 22 74C24 62 32 53 46 51C58 50 68 54 79 57C66 52 54 40 50 26L34 8L12 22Z" fill="#faf8d8" stroke="#2a2a20" strokeWidth="2" />
                  <path d="M22 74C20 60 24 50 28 43M79 57C64 50 46 46 28 43L10 38M28 43L48 28M25 56C32 48 48 47 62 50M26 48C32 44 42 42 52 44" fill="none" stroke="#2a2a20" strokeWidth="1.800" />
                </svg>
                <WebworkName>WeBWorK</WebworkName>
              </WebworkLogo>
              <MaaLogo href="#">
                <svg width="80" height="70" viewBox="0 0 80 70">
                  <path d="M36 0L74 42L58 68H18L0 40Z" fill="#5f83c4" stroke="#fff" strokeWidth="1.500" />
                  <path d="M18 68L50 52L58 68Z" fill="#fff" />
                  <path d="M36 0L50 52L0 40M50 52L74 42M18 68L20 30L50 52M10 40L30 62M16 34L38 58" fill="none" stroke="#dfe7f5" strokeWidth="1.200" />
                  <circle cx="68" cy="63" r="4" fill="none" stroke="#7f9ccf" strokeWidth="1.500" />
                </svg>
                <MaaLetters>MAA</MaaLetters>
                <MaaName>MATHEMATICAL ASSOCIATION OF AMERICA</MaaName>
              </MaaLogo>
              <LogOut aria-label="Log Out" />
            </Masthead>

            <Columns>
              <Sidebar>
                <MainMenu>
                  <MenuHeading>MAIN MENU</MenuHeading>
                  <NavList>
                    <li><NavLink href="#">Courses</NavLink></li>
                    <li>
                      <NavLink href="#">Homework Sets</NavLink>
                      <NavList $nested>
                        <li><NavLink href="#">Homework 5 Section 2.3</NavLink></li>
                        <li><NavLink href="#" $active>Problem 1</NavLink></li>
                      </NavList>
                    </li>
                    <li><NavLink href="#">User Settings</NavLink></li>
                    <li><NavLink href="#">Grades</NavLink></li>
                  </NavList>
                </MainMenu>
                <ProblemsPanel>
                  <PanelHeading>Problems</PanelHeading>
                  <ProgressTrack />
                  <ProblemList>
                    {problems.map((p, i) => (
                      <li key={p}><ProblemLink href="#" $active={i === 0}>{p}</ProblemLink></li>
                    ))}
                  </ProblemList>
                </ProblemsPanel>
              </Sidebar>

              <Content>
                <CrumbRow>
                  <BackButton aria-label="Up one level">
                    <svg width="16" height="24" viewBox="0 0 16 24"><path d="M13.500 2L4 12L13.500 22" fill="none" stroke="#333" strokeWidth="5" /></svg>
                  </BackButton>
                  <Crumbs>
                    <Crumb href="#">webwork</Crumb>/<Crumb href="#">ma109su2-2020</Crumb>/
                    <Crumb href="#">homework_5_section_2.3</Crumb>/<Crumb href="#">1</Crumb>
                  </Crumbs>
                </CrumbRow>
                <Title>Homework 5 Section 2.3: Problem 1</Title>
                <ButtonRow>
                  <Button disabled>Previous Problem</Button>
                  <Button>Problem List</Button>
                  <Button>Next Problem</Button>
                </ButtonRow>
                <ProblemColumns>
                  <ProblemBody>
                    <Paragraph>
                      (1 point) In a college meal plan you pay a membership fee, then all of your meals are at a fixed
                      price per week. If 30 meals cost $150.5 and 50 meals cost $215.5 , answer the following questions:
                    </Paragraph>
                    <Paragraph>
                      a) Write a formula for the cost of a meal plan, <i>C</i> , in terms of the number of meals, <i>n</i> .
                      <br />
                      <label htmlFor="ans-a"><MathText><i>C</i> =</MathText></label> <Answer id="ans-a" />
                    </Paragraph>
                    <Paragraph>
                      <label htmlFor="ans-b">b) What is the membership fee? $</label> <Answer id="ans-b" />
                    </Paragraph>
                    <Paragraph>
                      <label htmlFor="ans-c">c) What is the price per meal? $</label> <Answer id="ans-c" /> per meal
                    </Paragraph>
                    <Paragraph>
                      <label htmlFor="ans-d">d) Find the cost for 40 meals. $</label> <Answer id="ans-d" />
                    </Paragraph>
                    <Paragraph>
                      <label htmlFor="ans-e">
                        e) Find <i>n</i> in terms of <i>C</i> . <MathText $indent><i>n</i> =</MathText>
                      </label>{" "}
                      <Answer id="ans-e" $width={458} />
                    </Paragraph>
                    <Paragraph>
                      f) Finally, use your answer in part (e) to determine the maximum number of meals you can buy on a
                      budget of $300. Maximum number of meals implies if you find that <i>n</i> = 3.9, then you can buy
                      a maximum of 3 meals. You must truncate any decimal solutions (which is different from rounding).
                    </Paragraph>
                    <Paragraph>
                      <label htmlFor="ans-f"><MathText><i>n</i> =</MathText></label> <Answer id="ans-f" $width={218} /> meals
                    </Paragraph>
                  </ProblemBody>
                </ProblemColumns>
                <Note><b>Note:</b> <i>You can earn partial credit on this problem.</i></Note>
                <ButtonRow $submit>
                  <Button>Preview My Answers</Button>
                  <Button>Submit Answers</Button>
                </ButtonRow>
                <Paragraph>
                  You have attempted this problem 0 times.
                  <br />
                  You have unlimited attempts remaining.
                </Paragraph>
              </Content>
            </Columns>
          </Page>
        </Viewport>
      </BrowserWindow>

      <DockArea>
        <Waves aria-hidden="true">
          <filter id="sea" x="0" y="0" width="100%" height="100%">
            <feTurbulence type="fractalNoise" baseFrequency="0.03 0.12" numOctaves="4" seed="4" />
            <feColorMatrix values="0 0 0 0 0.22  0 0 0 0 0.38  0 0 0 0 0.52  1.2 0 0 0 -0.5" />
          </filter>
          <rect y="12" width="100%" height="124" filter="url(#sea)" />
        </Waves>
        <DockTray>
          <DockItems items={apps} />
          <DockDivider />
          <DockItems items={recent} />
          <DockDivider />
          <DockItems items={files} />
        </DockTray>
      </DockArea>
    </Desktop>
  );
}
